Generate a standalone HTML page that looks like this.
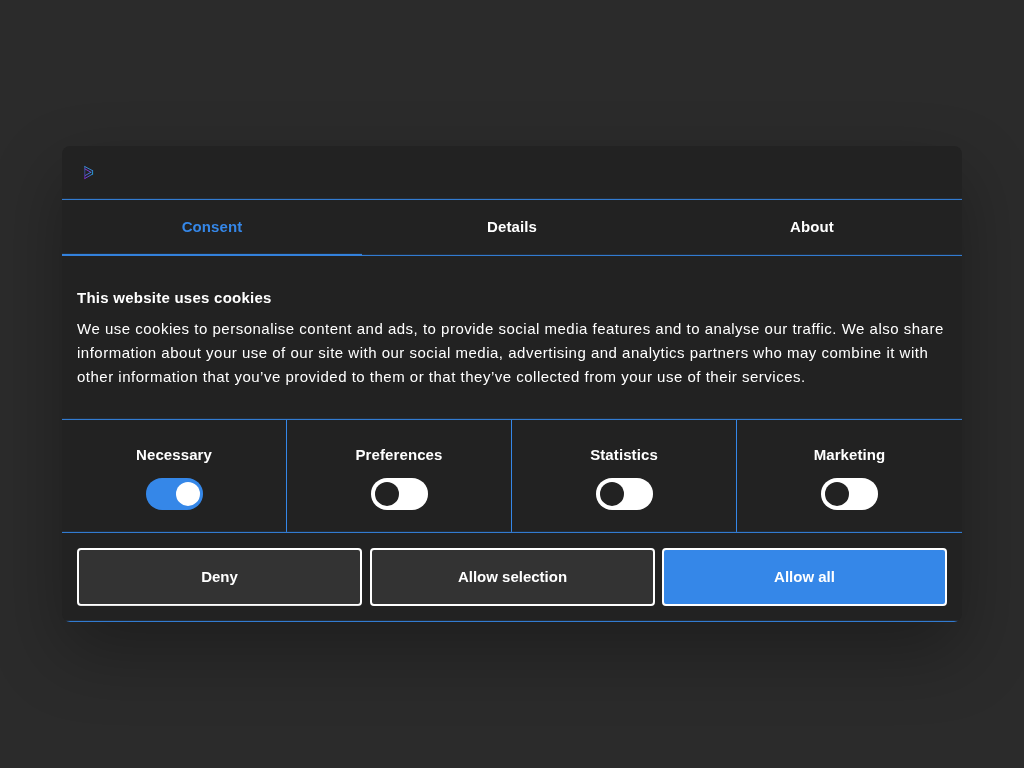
<!DOCTYPE html>
<html><head><meta charset="utf-8">
<style>
html,body{margin:0;padding:0;width:1024px;height:768px;overflow:hidden;background:#2b2b2b;font-family:"Liberation Sans",sans-serif;}
#dlg{position:absolute;left:62px;top:146px;width:900px;height:476px;background:#222222;border-radius:8px;overflow:hidden;box-shadow:0 30px 70px rgba(0,0,0,.3);color:#ffffff;will-change:transform;transform:translateY(-0.12px);}
#hdr{position:absolute;left:0;top:0;width:900px;height:53px;border-bottom:1px solid #3587e8;}
#logo{position:absolute;left:16px;top:14px;}
#nav{position:absolute;left:0;top:54px;width:900px;height:55px;border-bottom:1px solid #3587e8;}
.tab{position:absolute;top:-1px;width:300px;height:55px;line-height:55px;text-align:center;font-weight:bold;font-size:15px;letter-spacing:.1px;color:#fff;}
.tab.act{color:#3587e8;}
#uline{position:absolute;left:0;top:108px;width:300px;height:2px;background:#3382de;}
#body{position:absolute;left:15px;top:140px;width:870px;}
h2{margin:0;font-size:15px;font-weight:bold;letter-spacing:.25px;line-height:24px;}
p{margin:7px 0 0 0;font-size:15px;letter-spacing:.5px;line-height:24px;}
#levels{position:absolute;left:0;top:273px;width:900px;height:112px;border-top:1px solid #3587e8;border-bottom:1px solid #3587e8;}
.lvl{position:absolute;top:0;width:224px;height:112px;border-right:1px solid #3587e8;text-align:center;}
.lvl:last-child{border-right:none;}
.lvl .lab{position:absolute;left:0;right:0;top:25px;font-size:15px;font-weight:bold;letter-spacing:.1px;line-height:20px;}
.tog{position:absolute;left:84px;top:58px;width:57px;height:32px;border-radius:16px;background:#fff;}
.tog .k{position:absolute;top:4px;left:4px;width:24px;height:24px;border-radius:50%;background:#222222;}
.tog.on{background:#3587e8;}
.tog.on .k{left:30px;background:#fff;}
.btn{position:absolute;top:402px;height:58px;width:285px;box-sizing:border-box;border:2px solid #fff;border-radius:4px;background:#333333;color:#fff;font-size:15px;font-weight:bold;letter-spacing:0px;text-align:center;line-height:54px;}
.btn.pri{background:#3587e8;}
#foot{position:absolute;left:0;top:475px;width:900px;height:1px;background:#3587e8;}
</style></head><body>
<div id="dlg">
  <div id="hdr"><svg id="logo" width="20" height="20" viewBox="78 160 20 20"><defs>
<linearGradient id="gt" x1="84.7" y1="166.2" x2="92.7" y2="170.4" gradientUnits="userSpaceOnUse"><stop offset="0" stop-color="#3a8ee0"/><stop offset="1" stop-color="#3a8ad8"/></linearGradient>
<linearGradient id="gr" x1="92.7" y1="170.4" x2="92.7" y2="174.4" gradientUnits="userSpaceOnUse"><stop offset="0" stop-color="#3a80d8"/><stop offset="1" stop-color="#18b0d8"/></linearGradient>
<linearGradient id="gb" x1="92.7" y1="174.4" x2="84.8" y2="178.9" gradientUnits="userSpaceOnUse"><stop offset="0" stop-color="#2a9ed8"/><stop offset="0.5" stop-color="#5a58dc"/><stop offset="1" stop-color="#8a28d8"/></linearGradient>
<linearGradient id="gl" x1="84.7" y1="166.2" x2="84.7" y2="178.9" gradientUnits="userSpaceOnUse"><stop offset="0" stop-color="#3a86d8"/><stop offset="0.4" stop-color="#3a60c0"/><stop offset="1" stop-color="#8a28d8"/></linearGradient>
<linearGradient id="gi1" x1="85.1" y1="169.1" x2="90.9" y2="172.4" gradientUnits="userSpaceOnUse"><stop offset="0" stop-color="#9a30e0"/><stop offset="1" stop-color="#6a48d8"/></linearGradient>
<linearGradient id="gi2" x1="90.9" y1="172.4" x2="85.3" y2="175.6" gradientUnits="userSpaceOnUse"><stop offset="0" stop-color="#3a90e0"/><stop offset="1" stop-color="#5a58e0"/></linearGradient>
</defs><g fill="none" stroke-width="0.95" stroke-linecap="round">
<path d="M84.8 166.7 L92.6 170.8" stroke="url(#gt)"/>
<path d="M92.6 170.8 L92.6 174.2" stroke="url(#gr)"/>
<path d="M92.6 174.2 L84.9 178.6" stroke="url(#gb)"/>
<path d="M84.8 166.7 L84.8 178.6" stroke="url(#gl)" stroke-opacity="0.8"/>
<path d="M85.1 169.1 L90.9 172.4" stroke="url(#gi1)"/>
<path d="M90.9 172.4 L85.3 175.6" stroke="url(#gi2)"/>
</g></svg></div>
  <div id="nav">
    <div class="tab act" style="left:0">Consent</div>
    <div class="tab" style="left:300px">Details</div>
    <div class="tab" style="left:600px">About</div>
  </div>
  <div id="uline"></div>
  <div id="body">
    <h2>This website uses cookies</h2>
    <p>We use cookies to personalise content and ads, to provide social media features and to analyse our traffic. We also share information about your use of our site with our social media, advertising and analytics partners who may combine it with other information that you’ve provided to them or that they’ve collected from your use of their services.</p>
  </div>
  <div id="levels">
    <div class="lvl" style="left:0"><div class="lab">Necessary</div><div class="tog on"><div class="k"></div></div></div>
    <div class="lvl" style="left:225px"><div class="lab">Preferences</div><div class="tog"><div class="k"></div></div></div>
    <div class="lvl" style="left:450px"><div class="lab">Statistics</div><div class="tog"><div class="k"></div></div></div>
    <div class="lvl" style="left:675px;width:225px"><div class="lab">Marketing</div><div class="tog"><div class="k"></div></div></div>
  </div>
  <div class="btn" style="left:15px">Deny</div>
  <div class="btn" style="left:308px">Allow selection</div>
  <div class="btn pri" style="left:600px">Allow all</div>
  <div id="foot"></div>
</div>
</body></html>
